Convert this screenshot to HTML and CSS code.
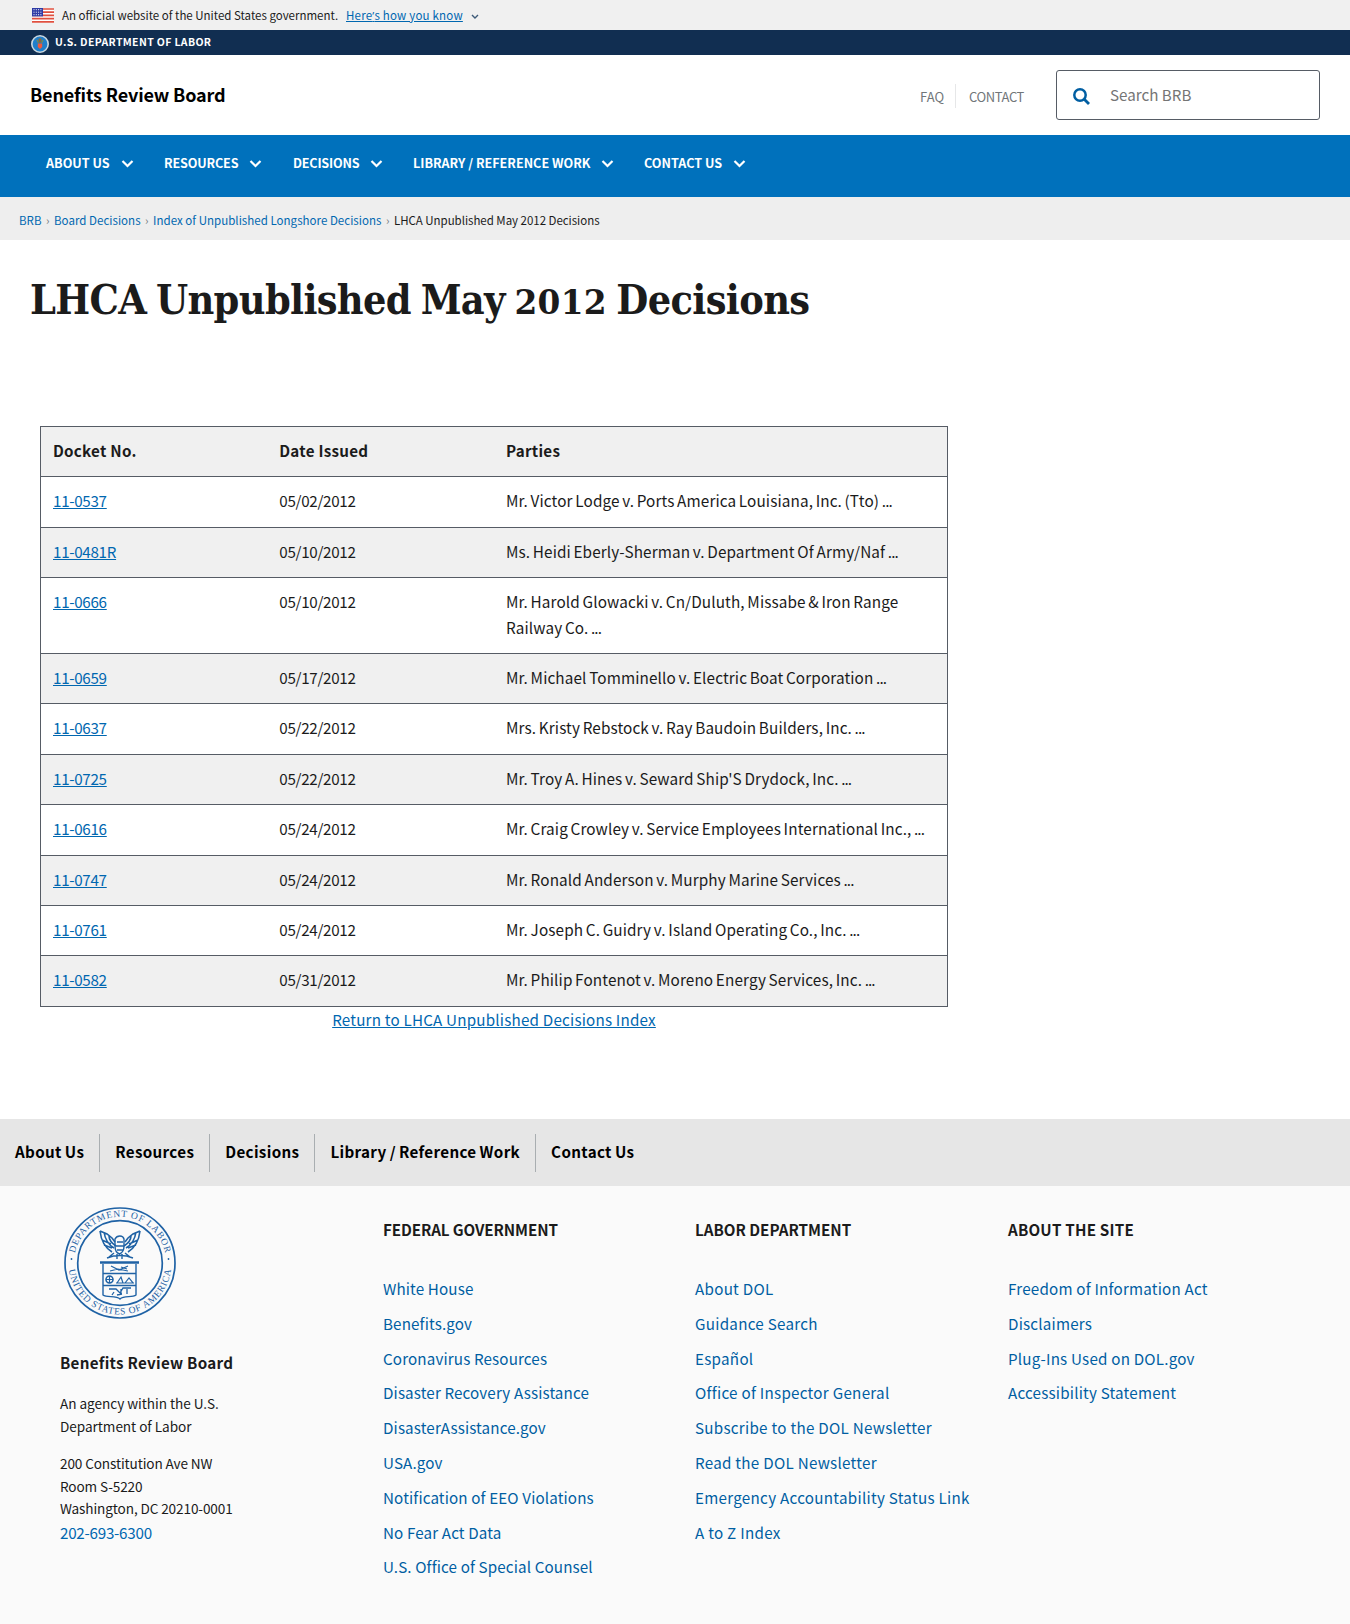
FILE: index.html
```html
<!DOCTYPE html>
<html lang="en">
<head>
<meta charset="utf-8">
<title>LHCA Unpublished May 2012 Decisions</title>
<link rel="stylesheet" href="styles.css">
</head>
<body>
<div class="banner">
  <svg class="flag" width="22" height="15" viewBox="0 0 22 15">
    <rect width="22" height="15" fill="#fff"/>
    <path d="M0 1h22M0 4.2h22M0 7.4h22M0 10.6h22M0 13.8h22" stroke="#e0503f" stroke-width="1.7"/>
    <rect width="11" height="8.4" fill="#2f3ba5"/>
    <path d="M1.5 1.7h9M1.5 4.2h9M1.5 6.7h9" stroke="#fff" stroke-width="1" stroke-dasharray="1 1.3"/>
  </svg>
  <span class="banner-text">An official website of the United States government.</span>
  <a class="banner-link" href="#">Here<span class="apos">’</span>s how you know</a>
  <svg class="banner-chevron" width="8" height="6" viewBox="0 0 8 6"><path d="M1 1l3 3 3-3" fill="none" stroke="#3d5a78" stroke-width="1.4"/></svg>
</div>
<div class="agency">
  <svg class="agency-seal" width="18" height="18" viewBox="0 0 18 18">
    <circle cx="9" cy="9" r="8.2" fill="#1f7fcb" stroke="#c9d6de" stroke-width="1.6"/>
    <path d="M6 5l1.500 3M12 5l-1.500 3" stroke="#7a8c4f" stroke-width="1.2"/>
    <path d="M7.600 3.500h2.800v4H7.600z" fill="#8d6a35"/>
    <path d="M6.800 8.500h4.400v3.600L9 14l-2.200-1.900z" fill="#f0593b"/>
  </svg>
  <span class="agency-name">U.S. DEPARTMENT OF LABOR</span>
</div>
<header class="header">
  <a class="site-name" href="#">Benefits Review Board</a>
  <nav class="secondary"><a class="faq" href="#">FAQ</a><a class="contact" href="#">CONTACT</a></nav>
  <div class="search">
    <svg width="17" height="17" viewBox="0 0 17 17"><circle cx="7" cy="7" r="5.700" fill="none" stroke="#005ea2" stroke-width="2.500"/><path d="M11 11l5 5" stroke="#005ea2" stroke-width="2.800"/></svg>
    <span>Search BRB</span>
  </div>
</header>
<nav class="main-nav">
  <a class="n1" href="#">ABOUT US<svg class="chev" viewBox="0 0 12 8"><path d="M1 1l5 5 5-5"/></svg></a>
  <a class="n2" href="#">RESOURCES<svg class="chev" viewBox="0 0 12 8"><path d="M1 1l5 5 5-5"/></svg></a>
  <a class="n3" href="#">DECISIONS<svg class="chev" viewBox="0 0 12 8"><path d="M1 1l5 5 5-5"/></svg></a>
  <a class="n4" href="#">LIBRARY / REFERENCE WORK<svg class="chev" viewBox="0 0 12 8"><path d="M1 1l5 5 5-5"/></svg></a>
  <a class="n5" href="#">CONTACT US<svg class="chev" viewBox="0 0 12 8"><path d="M1 1l5 5 5-5"/></svg></a>
</nav>
<nav class="crumbs">
  <a href="#">BRB</a><i>›</i><a href="#">Board Decisions</a><i>›</i><a href="#">Index of Unpublished Longshore Decisions</a><i>›</i><span>LHCA Unpublished May 2012 Decisions</span>
</nav>
<main>
  <h1>LHCA Unpublished May <span class="oldstyle">2012</span> Decisions</h1>
  <table>
    <thead><tr><th>Docket No.</th><th>Date Issued</th><th class="parties">Parties</th></tr></thead>
    <tbody>
      <tr><td><a href="#">11-0537</a></td><td>05/02/2012</td><td>Mr. Victor Lodge v. Ports America Louisiana, Inc. (Tto) <span class="dots">...</span></td></tr>
      <tr><td><a href="#">11-0481R</a></td><td>05/10/2012</td><td>Ms. Heidi Eberly-Sherman v. Department Of Army/Naf <span class="dots">...</span></td></tr>
      <tr><td><a href="#">11-0666</a></td><td>05/10/2012</td><td>Mr. Harold Glowacki v. Cn/Duluth, Missabe &amp; Iron Range<br>Railway Co. <span class="dots">...</span></td></tr>
      <tr><td><a href="#">11-0659</a></td><td>05/17/2012</td><td>Mr. Michael Tomminello v. Electric Boat Corporation <span class="dots">...</span></td></tr>
      <tr><td><a href="#">11-0637</a></td><td>05/22/2012</td><td>Mrs. Kristy Rebstock v. Ray Baudoin Builders, Inc. <span class="dots">...</span></td></tr>
      <tr><td><a href="#">11-0725</a></td><td>05/22/2012</td><td>Mr. Troy A. Hines v. Seward Ship'S Drydock, Inc. <span class="dots">...</span></td></tr>
      <tr><td><a href="#">11-0616</a></td><td>05/24/2012</td><td>Mr. Craig Crowley v. Service Employees International Inc., <span class="dots">...</span></td></tr>
      <tr><td><a href="#">11-0747</a></td><td>05/24/2012</td><td>Mr. Ronald Anderson v. Murphy Marine Services <span class="dots">...</span></td></tr>
      <tr><td><a href="#">11-0761</a></td><td>05/24/2012</td><td>Mr. Joseph C. Guidry v. Island Operating Co., Inc. <span class="dots">...</span></td></tr>
      <tr><td><a href="#">11-0582</a></td><td>05/31/2012</td><td>Mr. Philip Fontenot v. Moreno Energy Services, Inc. <span class="dots">...</span></td></tr>
    </tbody>
  </table>
  <p class="return"><a href="#">Return to LHCA Unpublished Decisions Index</a></p>
</main>
<nav class="footer-nav">
  <a href="#">About Us</a><a href="#">Resources</a><a href="#">Decisions</a><a href="#">Library / Reference Work</a><a href="#">Contact Us</a>
</nav>
<footer class="footer">
  <div class="about">
    <svg class="seal" width="112" height="112" viewBox="0 0 112 112">
      <defs>
        <path id="arc-top" d="M9.800 56a46.200 46.200 0 0 1 92.400 0"/>
        <path id="arc-bottom" d="M4.500 56a51.500 51.500 0 0 0 103 0"/>
      </defs>
      <g fill="none" stroke="#1f62a5">
        <circle cx="56" cy="56" r="55" stroke-width="1.700"/>
        <circle cx="56" cy="56" r="42.300" stroke-width="1.700"/>
        <path d="M36 24c1 9 4 16 12 21M40 25c1 7 5 13 10 16M45 29c0 5 4 8 7 10M36 24l7 3 5 4 3 4M76 24c-1 9-4 16-12 21M72 25c-1 7-5 13-10 16M67 29c0 5-4 8-7 10M76 24l-7 3-5 4-3 4M38 33l9 4M40 38l8 3M74 33l-9 4M72 38l-8 3" stroke-width="1.600"/>
        <path d="M51 32c2-4 8-4 9 0v7c0 4-2 7-4.500 8-3-1-4.500-4-4.500-8zM53 35h6M52 39h8M53 43h6M50 46l-5 4M61 46l5 4M53 47v5M58 47v5M43 51c8-3 18-3 26 0" stroke-width="1.400"/>
        <path d="M36 55.500h39" stroke-width="2.400"/>
        <path d="M39 57v31c4 3 13 0 17 4 4-4 12-1 16-4V57M39 66.500h33M39 78.500h33" stroke-width="1.400"/>
        <path d="M47 59l8 4 9-4M46 64l8-2 10 2M57 60l6 2" stroke-width="1.200"/>
        <circle cx="45.500" cy="72.500" r="3.500" stroke-width="1.600"/>
        <path d="M42 72.500h7M45.500 69v7M53 76l4-6 2 6zM61 76l4-5 4 5zM52 76h18" stroke-width="1.200"/>
        <path d="M45 82h7l4 4 3-5h8M50 85l-2 3M57 82v5M63 82v5M53 88l5-1" stroke-width="1.300"/>
      </g>
      <g class="seal-text">
        <text><textPath href="#arc-top" startOffset="50%" textLength="125">DEPARTMENT OF LABOR</textPath></text>
        <text><textPath href="#arc-bottom" startOffset="50%" textLength="148">UNITED STATES OF AMERICA</textPath></text>
      </g>
      <circle cx="7.500" cy="52" r="0.900" fill="#1f62a5"/><circle cx="104.500" cy="52" r="0.900" fill="#1f62a5"/>
    </svg>
    <h3>Benefits Review Board</h3>
    <p>An agency within the U.S.<br>Department of Labor</p>
    <p>200 Constitution Ave NW<br>Room S-5220<br>Washington, DC 20210-0001</p>
    <a class="phone" href="#">202-693-6300</a>
  </div>
  <div class="links federal">
    <h4>FEDERAL GOVERNMENT</h4>
    <a href="#">White House</a><a href="#">Benefits.gov</a><a href="#">Coronavirus Resources</a><a href="#">Disaster Recovery Assistance</a><a href="#">DisasterAssistance.gov</a><a href="#">USA.gov</a><a href="#">Notification of EEO Violations</a><a href="#">No Fear Act Data</a><a href="#">U.S. Office of Special Counsel</a>
  </div>
  <div class="links labor">
    <h4>LABOR DEPARTMENT</h4>
    <a href="#">About DOL</a><a href="#">Guidance Search</a><a href="#">Español</a><a href="#">Office of Inspector General</a><a href="#">Subscribe to the DOL Newsletter</a><a href="#">Read the DOL Newsletter</a><a href="#">Emergency Accountability Status Link</a><a href="#">A to Z Index</a>
  </div>
  <div class="links site">
    <h4>ABOUT THE SITE</h4>
    <a href="#">Freedom of Information Act</a><a href="#">Disclaimers</a><a href="#">Plug-Ins Used on DOL.gov</a><a href="#">Accessibility Statement</a>
  </div>
</footer>
</body>
</html>
```
FILE: styles.css
```css
* { box-sizing: border-box; }
body {
  margin: 0;
  background: #fff;
  color: #1b1b1b;
  font-family: "Noto Sans CJK SC", sans-serif;
  font-size: 15.2px;
  line-height: 25.44px;
}
a { color: #0067b0; text-decoration: none; }

.banner { display: flex; align-items: center; height: 30px; padding: 1px 0 0 32px; background: #f0f0f0; font-size: 11.5px; }
.banner-text { width: 284px; margin-left: 8px; white-space: nowrap; }
.banner-link { text-decoration: underline; white-space: nowrap; letter-spacing: 0.2px; }
.apos { font-family: "Open Sans", sans-serif; }
.banner-chevron { flex: none; margin: 2px 0 0 8px; }

.agency { display: flex; align-items: center; height: 25px; padding-left: 31px; background: #112e51; color: #fff; font-size: 10.5px; font-weight: 700; letter-spacing: 0.35px; }
.agency-seal { margin: 3px 6px 0 0; }
.agency-name { padding-bottom: 2px; }

.header { display: flex; align-items: center; height: 80px; padding: 0 30px; }
.site-name { color: #000; font-size: 18px; font-weight: 700; width: 890px; letter-spacing: -0.15px; }
.secondary { display: flex; width: 136px; font-size: 13px; padding-top: 1px; }
.secondary a { color: #71767a; height: 24px; line-height: 26px; }
.faq { width: 36px; border-right: 1px solid #e6e7e8; }
.contact { padding-left: 13px; letter-spacing: -0.4px; }
.search { display: flex; align-items: center; width: 264px; height: 50px; border: 1px solid #565c65; border-radius: 3px; padding-left: 16px; color: #757575; }
.search svg { margin: 3px 20px 0 0; }

.main-nav { display: flex; height: 62px; padding: 15px 0 0 46px; background: #0071bc; font-size: 12.6px; font-weight: 700; }
.main-nav a { color: #fff; white-space: nowrap; }
.chev { width: 13px; height: 8px; margin-left: 11px; fill: none; stroke: #fff; stroke-width: 2.2; }
.n1 { width: 118px; }
.n2 { width: 129px; letter-spacing: -0.15px; }
.n3 { width: 120px; letter-spacing: -0.2px; }
.n4 { width: 231px; }

.crumbs { display: flex; height: 43px; padding: 11px 0 0 19px; background: #eee; font-size: 11.5px; white-space: nowrap; letter-spacing: 0.03px; }
.crumbs i { width: 12.5px; text-align: center; font-style: normal; color: #71767a; }
.crumbs span { letter-spacing: -0.03px; }

main { height: 879px; padding-left: 30px; }
h1 { margin: 0; padding-top: 33px; height: 186px; font: 700 41px/54px "DejaVu Serif Condensed", "DejaVu Serif", serif; letter-spacing: -0.65px; word-spacing: -2.5px; white-space: nowrap; }
.oldstyle { font-family: "DejaVu Serif", serif; font-size: 0.8em; letter-spacing: 0.2px; }
table { width: 908px; margin-left: 10px; border-collapse: collapse; table-layout: fixed; border: 1px solid #565c65; }
th, td { padding: 11px 12px 12.96px; text-align: left; vertical-align: top; border-bottom: 1px solid #565c65; white-space: nowrap; letter-spacing: -0.3px; }
th { letter-spacing: 0.25px; }
td:last-child { font-size: 15.3px; letter-spacing: 0.11px; word-spacing: -0.9px; }
td .dots { letter-spacing: -0.9px; }
.parties { width: 50%; }
thead tr, tbody tr:nth-child(even) { background: #f0f0f0; }
td a, .return a { text-decoration: underline; }
.return { width: 928px; margin: 0; text-align: center; letter-spacing: 0.2px; }

.footer-nav { display: flex; height: 67px; padding: 15px 0 14px; background: #e6e6e6; font-weight: 700; letter-spacing: 0.33px; word-spacing: -0.7px; }
.footer-nav a { color: #000; padding: 0 15px; line-height: 35px; border-right: 1px solid #a9aeb1; }
.footer-nav a:last-child { border: 0; }

.footer { display: grid; grid-template-columns: 323px 312px 313px 1fr; height: 438px; padding-left: 60px; background: #fafafa; }
.about { padding-top: 21px; font-size: 13.6px; line-height: 22.6px; }
.seal { display: block; margin-left: 4px; }
.seal-text { font: 9.500px "Liberation Serif", serif; fill: #1f62a5; text-anchor: middle; }
.about h3 { margin: 30px 0 16px; font-size: 15.2px; line-height: 27px; letter-spacing: 0.27px; }
.about p { margin: 0 0 15px; letter-spacing: -0.05px; }
.about p + p { margin-bottom: -1px; letter-spacing: -0.12px; }
.phone { font-size: 15.2px; line-height: 27px; letter-spacing: -0.25px; }
.links { padding-top: 30px; }
.links h4 { margin: 0 0 29px; font-size: 15.2px; line-height: 26px; letter-spacing: 0; }
.links a { display: block; color: #005ea2; line-height: 34.8px; }
.federal { letter-spacing: 0.13px; }
.labor { letter-spacing: 0.27px; }
.site { letter-spacing: 0.2px; }
.federal h4 { letter-spacing: -0.1px; }
.site h4 { letter-spacing: 0.2px; }
```
